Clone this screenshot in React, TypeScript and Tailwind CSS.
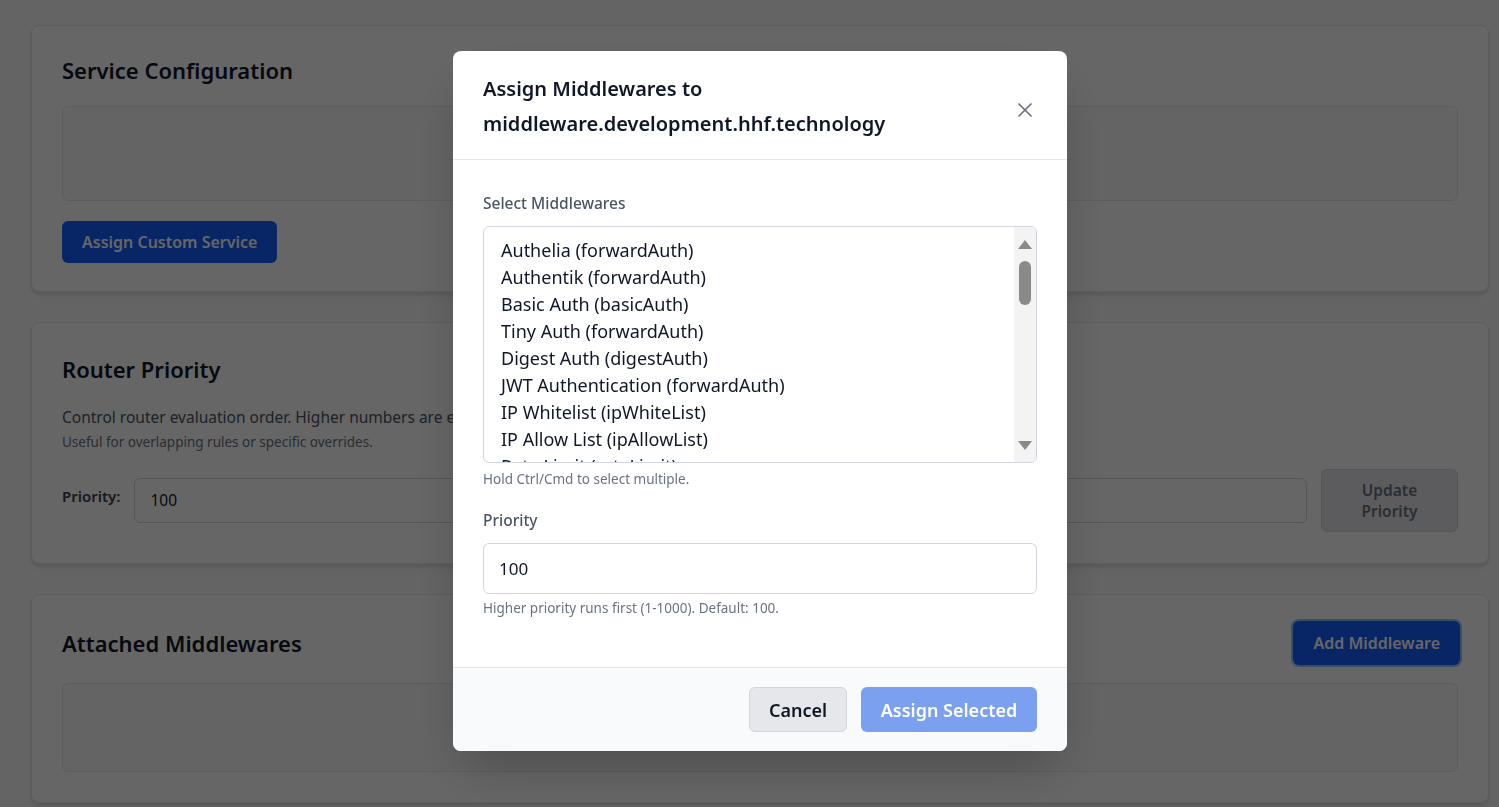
import { X } from "lucide-react"

const middlewares = [
  "Authelia (forwardAuth)",
  "Authentik (forwardAuth)",
  "Basic Auth (basicAuth)",
  "Tiny Auth (forwardAuth)",
  "Digest Auth (digestAuth)",
  "JWT Authentication (forwardAuth)",
  "IP Whitelist (ipWhiteList)",
  "IP Allow List (ipAllowList)",
  "Rate Limit (rateLimit)",
  "Headers (headers)",
  "Compress (compress)",
]

export default function App() {
  return (
    <div className="relative min-h-screen bg-gray-50 font-['Noto_Sans',sans-serif] text-gray-900">
      <div className="flex flex-col gap-[30px] pt-[25px] pr-[10px] pb-4 pl-[31px]">
        <section className="rounded-lg border border-gray-200 bg-white px-[30px] pt-[30px] pb-[28px] shadow-md">
          <h2 className="text-[22px] leading-7 font-semibold">Service Configuration</h2>
          <div className="mt-[22px] h-[95px] rounded-md border border-gray-200 bg-gray-50" />
          <button className="mt-[20px] h-[42px] rounded-md bg-blue-600 px-5 text-base font-semibold text-white">
            Assign Custom Service
          </button>
        </section>

        <section className="rounded-lg border border-gray-200 bg-white px-[30px] pt-[32px] pb-[31px] shadow-md">
          <h2 className="text-[22px] leading-7 font-semibold">Router Priority</h2>
          <p className="mt-[22px] text-[15.5px] leading-6 text-gray-600">
            Control router evaluation order. Higher numbers are evaluated first.
          </p>
          <p className="mt-[4px] text-[13.5px] leading-[18px] text-gray-500">
            Useful for overlapping rules or specific overrides.
          </p>
          <div className="mt-[18px] flex items-center gap-[14px]">
            <label className="mb-2 text-[15px] font-semibold text-gray-700">Priority:</label>
            <div className="flex h-[45px] flex-1 items-center rounded-md border border-gray-300 px-[15px] text-[15.5px]">
              100
            </div>
            <button className="h-[63px] w-[137px] rounded-md border border-gray-300 bg-gray-200 text-[15.5px] leading-[21px] font-semibold text-gray-500">
              Update
              <br />
              Priority
            </button>
          </div>
        </section>

        <section className="rounded-lg border border-gray-200 bg-white px-[30px] pt-[26px] pb-[30px] shadow-md">
          <div className="flex items-center justify-between">
            <h2 className="text-[22px] leading-7 font-semibold">Attached Middlewares</h2>
            <button className="mr-[-2px] h-[44px] rounded-md bg-blue-600 px-5 text-base font-semibold text-white ring-2 ring-blue-300">
              Add Middleware
            </button>
          </div>
          <div className="mt-[18px] h-[89px] rounded-md border border-gray-200 bg-gray-50" />
        </section>
      </div>

      <div className="fixed inset-0 flex items-start justify-center bg-black/60 pt-[51px] pl-[21px]">
        <div className="w-[614px] overflow-hidden rounded-lg bg-white shadow-2xl">
          <div className="flex items-center justify-between border-b border-gray-200 px-[30px] pt-[20px] pb-[18px]">
            <h3 className="text-xl leading-[35px] font-semibold text-gray-900">
              Assign Middlewares to
              <br />
              middleware.development.hhf.technology
            </h3>
            <X className="mt-2 h-6 w-6 text-gray-500" strokeWidth={1.75} />
          </div>

          <div className="px-[30px] pt-[33px] pb-[50px]">
            <label className="block text-[15.5px] leading-5 font-medium text-gray-600">Select Middlewares</label>
            <div className="mt-[13px] flex h-[237px] overflow-hidden rounded-md border border-gray-300">
              <div className="flex-1 overflow-hidden py-[10px] pl-[17px]">
                {middlewares.map((m) => (
                  <div key={m} className="h-[27px] text-[18px] leading-[27px] whitespace-nowrap text-gray-900">
                    {m}
                  </div>
                ))}
              </div>
              <div className="flex w-[22px] flex-col items-center bg-[#f3f3f3] pt-[13px]">
                <div className="h-0 w-0 border-x-[7px] border-b-[9px] border-x-transparent border-b-[#8a8a8a]" />
                <div className="mt-[12px] h-[44px] w-[12px] rounded-full bg-[#8a8a8a]" />
                <div className="mt-auto mb-[12px] h-0 w-0 border-x-[7px] border-t-[9px] border-x-transparent border-t-[#8a8a8a]" />
              </div>
            </div>
            <p className="mt-[7px] text-[13.5px] leading-[18px] text-gray-500">Hold Ctrl/Cmd to select multiple.</p>

            <label className="mt-[22px] block text-[15.5px] leading-5 font-medium text-gray-600">Priority</label>
            <div className="mt-[13px] flex h-[51px] items-center rounded-md border border-gray-300 px-[15px] text-[17px] text-gray-900">
              100
            </div>
            <p className="mt-[5px] text-[13.5px] leading-[18px] text-gray-500">
              Higher priority runs first (1-1000). Default: 100.
            </p>
          </div>

          <div className="flex justify-end gap-[14px] border-t border-gray-200 bg-gray-50 px-[30px] py-[19px]">
            <button className="h-[45px] w-[98px] rounded-md border border-gray-300 bg-gray-200 text-lg font-semibold text-gray-900">
              Cancel
            </button>
            <button className="h-[45px] w-[176px] rounded-md bg-[#7aa0ef] text-lg font-semibold text-white">
              Assign Selected
            </button>
          </div>
        </div>
      </div>
    </div>
  )
}
